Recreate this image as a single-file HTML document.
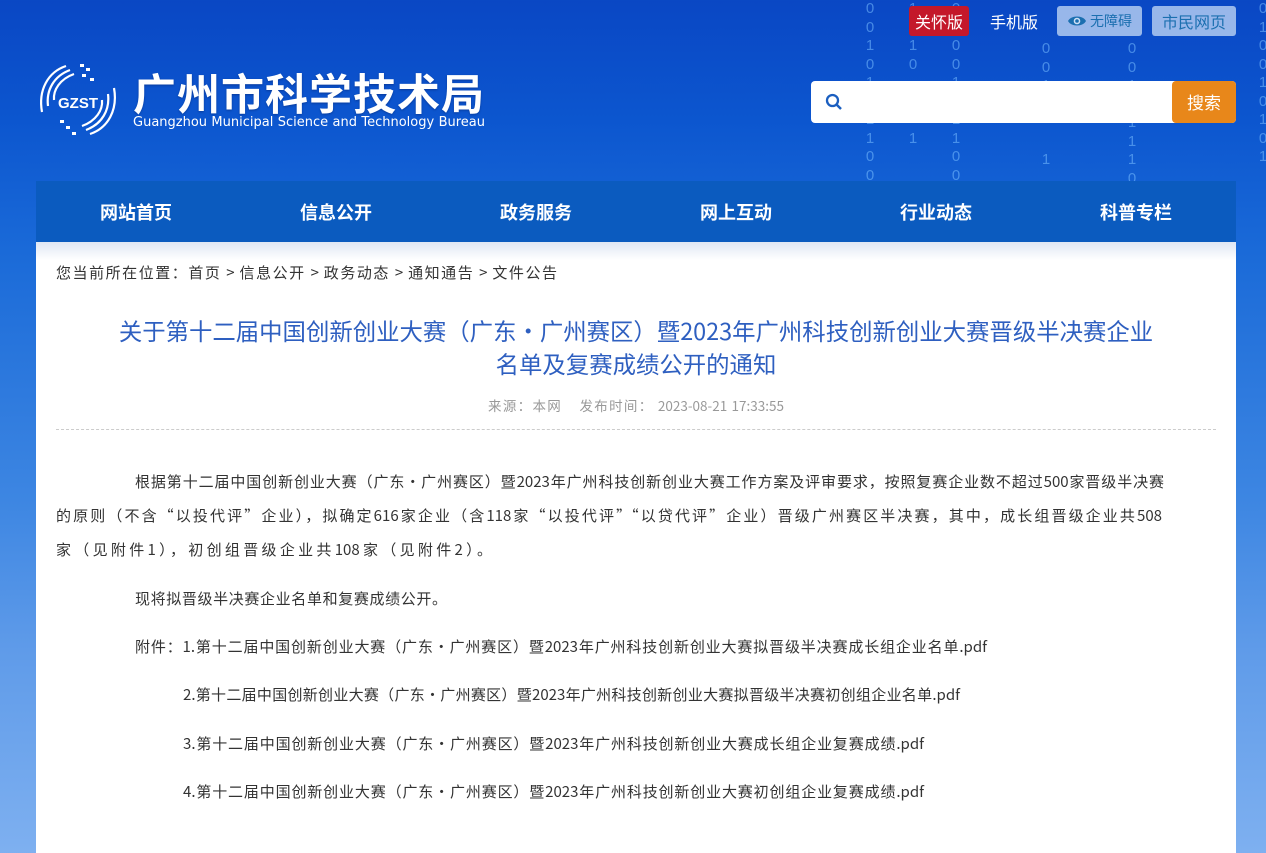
<!DOCTYPE html>
<html><head><meta charset="utf-8">
<style>
*{margin:0;padding:0;box-sizing:border-box}
body{width:1266px;height:853px;overflow:hidden;font-family:"Noto Sans CJK SC","Liberation Sans",sans-serif;
background:linear-gradient(180deg,#0a47c4 0px,#0c56cf 120px,#1a6ad8 250px,#3d86e2 500px,#5f9be9 650px,#7eb0f0 853px);position:relative}
.bits{position:absolute;top:0;color:rgba(120,190,255,.55);font-size:15px;line-height:18.5px;width:12px;text-align:center;font-family:"Liberation Sans",sans-serif}
.top{position:absolute;top:6px;height:30px;font-size:16px;line-height:30px;text-align:center;border-radius:3px}
.logo{position:absolute;left:36px;top:60px}
.nav{position:absolute;left:36px;top:181px;width:1200px;height:61px;background:#0b5bbf;display:flex}
.nav div{flex:1;text-align:center;color:#fff;font-weight:bold;font-size:18px;line-height:62px}
.main{position:absolute;left:36px;top:242px;width:1200px;height:611px;background:linear-gradient(180deg,#dfe7f4 0,#fff 18px,#fff 100%)}
.title{position:absolute;left:0;width:1200px;top:72px;text-align:center;color:#2e5fc0;font-size:23.4px;line-height:33px}
.hr{position:absolute;left:20px;right:20px;top:187px;border-top:1px dashed #ccc}
.j{position:absolute;font-size:15px;color:#333;line-height:22px;text-align:justify;text-align-last:justify;white-space:nowrap}
</style></head><body>
<div class="bits" style="left:864px">0<br>0<br>1<br>0<br>1<br>0<br>1<br>1<br>0<br>0</div>
<div class="bits" style="left:907px">1<br>0<br>1<br>0<br><br><br><br>1</div>
<div class="bits" style="left:950px">0<br>1<br>0<br>0<br>1<br>0<br>1<br>1<br>0<br>0</div>
<div class="bits" style="left:1040px;top:40px">0<br>0<br>1<br>0<br><br><br>1</div>
<div class="bits" style="left:1126px;top:40px">0<br>0<br>1<br>0<br>1<br>1<br>1<br>0<br>0<br>1</div>
<div class="bits" style="left:1257px">0<br>1<br>0<br>0<br>1<br>0<br>1<br>0<br>1</div>
<div class="top" style="left:909px;width:60px;background:#c4182a;color:#fff">关怀版</div>
<div class="top" style="left:984px;width:60px;color:#fff">手机版</div>
<div class="top" style="left:1057px;width:85px;background:rgba(200,220,245,.75);color:#1b6fb0;font-size:14px"><svg width="20" height="14" viewBox="0 0 20 14" style="vertical-align:-2px"><path d="M1 7C4 1 16 1 19 7C16 13 4 13 1 7Z" fill="#1b6fb0"/><circle cx="10" cy="7" r="3.3" fill="#cfe0f5"/><circle cx="10" cy="7" r="1.8" fill="#1b6fb0"/></svg> 无障碍</div>
<div class="top" style="left:1152px;width:84px;background:rgba(200,220,245,.75);color:#1b6fb0">市民网页</div>
<div class="logo">
<svg width="84" height="80" viewBox="0 0 84 80">
<g fill="none" stroke="#fff" stroke-width="2.2">
<path d="M30 6C12 12 2 30 6 52"/><path d="M34 10C18 16 10 30 12 46"/><path d="M38 14C24 19 17 30 18 40"/>
<path d="M54 74C72 68 82 50 78 28"/><path d="M50 70C66 64 74 50 72 34"/><path d="M46 66C60 61 67 50 66 40"/></g>
<g fill="#fff"><rect x="44" y="4" width="4" height="3"/><rect x="50" y="8" width="4" height="3"/><rect x="46" y="14" width="4" height="3"/><rect x="54" y="18" width="4" height="3"/><rect x="30" y="66" width="4" height="3"/><rect x="24" y="60" width="4" height="3"/><rect x="36" y="72" width="4" height="3"/></g>
<text x="42" y="48" text-anchor="middle" fill="#fff" font-weight="bold" font-size="15" font-family="Liberation Sans">GZST</text>
</svg>
</div>
<div style="position:absolute;left:133px;top:66px;color:#fff;font-size:43px;font-weight:bold;letter-spacing:1px;line-height:52px;text-shadow:0 1px 2px rgba(0,0,40,.3)">广州市科学技术局</div>
<div style="position:absolute;left:133px;top:115px;width:352px;color:#fff;font-family:'DejaVu Sans',sans-serif;font-size:13px;text-align:justify;text-align-last:justify;white-space:nowrap">Guangzhou Municipal Science and Technology Bureau</div>
<div style="position:absolute;left:811px;top:81px;width:425px;height:42px;background:#fff;border-radius:4px"></div>
<svg style="position:absolute;left:825px;top:93px" width="18" height="18" viewBox="0 0 18 18"><circle cx="7.5" cy="7.5" r="5.5" fill="none" stroke="#1b5fc0" stroke-width="2.3"/><path d="M11.5 11.5L16 16" stroke="#1b5fc0" stroke-width="2.5"/></svg>
<div style="position:absolute;left:1172px;top:81px;width:64px;height:42px;background:#e8871a;border-radius:4px;color:#fff;font-size:17px;line-height:42px;text-align:center">搜索</div>
<div class="nav"><div>网站首页</div><div>信息公开</div><div>政务服务</div><div>网上互动</div><div>行业动态</div><div>科普专栏</div></div>
<div class="main">
<div class="j" style="left:20px;top:20px;width:501px">您当前所在位置：首页 &gt; 信息公开 &gt; 政务动态 &gt; 通知通告 &gt; 文件公告</div>
<div class="title">关于第十二届中国创新创业大赛（广东·广州赛区）暨2023年广州科技创新创业大赛晋级半决赛企业<br>名单及复赛成绩公开的通知</div>
<div class="j" style="left:452px;top:153px;width:296px;color:#999;font-size:13.5px;line-height:20px">来源：本网&nbsp;&nbsp;&nbsp;&nbsp;发布时间： 2023-08-21 17:33:55</div>
<div class="hr"></div>
<div class="j" style="left:99px;width:1029px;top:229px">根据第十二届中国创新创业大赛（广东·广州赛区）暨2023年广州科技创新创业大赛工作方案及评审要求，按照复赛企业数不超过500家晋级半决赛</div>
<div class="j" style="left:20px;width:1106px;top:263px">的原则（不含“以投代评”企业），拟确定616家企业（含118家“以投代评”“以贷代评”企业）晋级广州赛区半决赛，其中，成长组晋级企业共508</div>
<div class="j" style="left:20px;width:436px;top:297px">家（见附件1），初创组晋级企业共108家（见附件2）。</div>
<div class="j" style="top:346px;left:99px;width:312px">现将拟晋级半决赛企业名单和复赛成绩公开。</div>
<div class="j" style="top:394px;left:99px;width:852px">附件：1.第十二届中国创新创业大赛（广东·广州赛区）暨2023年广州科技创新创业大赛拟晋级半决赛成长组企业名单.pdf</div>
<div class="j" style="top:442px;left:147px;width:777px">2.第十二届中国创新创业大赛（广东·广州赛区）暨2023年广州科技创新创业大赛拟晋级半决赛初创组企业名单.pdf</div>
<div class="j" style="top:491px;left:147px;width:741px">3.第十二届中国创新创业大赛（广东·广州赛区）暨2023年广州科技创新创业大赛成长组企业复赛成绩.pdf</div>
<div class="j" style="top:539px;left:147px;width:741px">4.第十二届中国创新创业大赛（广东·广州赛区）暨2023年广州科技创新创业大赛初创组企业复赛成绩.pdf</div>
</div>
</body></html>
